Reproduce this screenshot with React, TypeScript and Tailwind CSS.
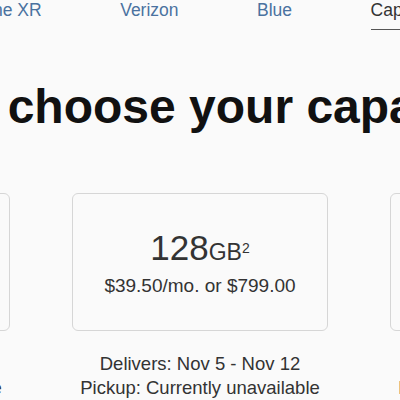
import React from "react";

const cards = [
  { size: "64", price: "$31.20/mo. or $749.00" },
  { size: "128", price: "$39.50/mo. or $799.00" },
  { size: "256", price: "$39.54/mo. or $949.00" },
];

export default function App() {
  return (
    <div
      className="w-[400px] h-[400px] overflow-hidden bg-[#fafafa] text-[#333]"
      style={{ fontFamily: '"Liberation Sans", Arial, sans-serif' }}
    >
      <nav className="flex gap-[78.5px] ml-[-42px] text-[17.5px] leading-[20px] whitespace-nowrap">
        <span className="text-[#4a72a0]">iPhone XR</span>
        <span className="text-[#4a72a0]">Verizon</span>
        <span className="text-[#4a72a0]">Blue</span>
        <span className="text-[#333] border-b border-[#555] pb-[9px] pr-[20px]">Capacity</span>
      </nav>

      <h1 className="mt-[49px] ml-[-107px] text-[48px] leading-[56px] font-bold text-[#111] whitespace-nowrap">
        Now choose your capacity.
      </h1>

      <div className="mt-[58px] flex justify-center gap-[62px]">
        {cards.map((c) => (
          <div key={c.size} className="w-[256px] shrink-0 flex flex-col items-center">
            <div className="w-[256px] h-[138px] border border-[#d6d6d6] rounded-[6px] flex flex-col items-center justify-center pt-[2px]">
              <div className="leading-[38px] whitespace-nowrap">
                <span className="text-[35px]">{c.size}</span>
                <span className="text-[23px]">GB</span>
                <sup className="text-[14px] leading-none">2</sup>
              </div>
              <div className="text-[19px] leading-[22px] mt-[0.5px] whitespace-nowrap">{c.price}</div>
            </div>
            <div className="mt-[21px] text-[18.5px] leading-[24px] text-center whitespace-nowrap">
              <div>Delivers: Nov 5 - Nov 12</div>
              <div>Pickup: Currently unavailable</div>
            </div>
          </div>
        ))}
      </div>
    </div>
  );
}
